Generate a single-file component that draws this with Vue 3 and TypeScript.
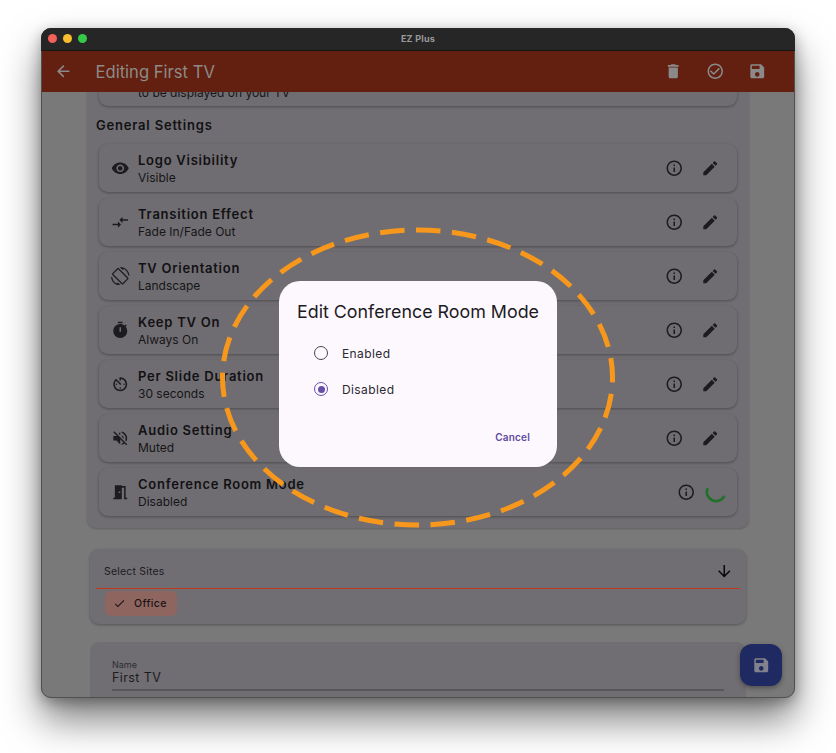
<script setup lang="ts">
interface SettingRow {
  title: string;
  value: string;
  icon: string;
  saving?: boolean;
}

const icons = {
  back: 'M20 11H7.83l5.59-5.59L12 4l-8 8 8 8 1.41-1.41L7.83 13H20v-2z',
  trash: 'M6 19c0 1.1.9 2 2 2h8c1.1 0 2-.9 2-2V7H6v12zM19 4h-3.5l-1-1h-5l-1 1H5v2h14V4z',
  done: 'M16.59 7.58L10 14.17l-3.59-3.58L5 12l5 5 8-8zM12 2C6.48 2 2 6.48 2 12s4.48 10 10 10 10-4.48 10-10S17.52 2 12 2zm0 18c-4.42 0-8-3.58-8-8s3.58-8 8-8 8 3.58 8 8-3.58 8-8 8z',
  save: 'M17 3H5c-1.11 0-2 .9-2 2v14c0 1.1.89 2 2 2h14c1.1 0 2-.9 2-2V7l-4-4zm-5 16c-1.66 0-3-1.34-3-3s1.34-3 3-3 3 1.34 3 3-1.34 3-3 3zm3-10H5V5h10v4z',
  info: 'M11 7h2v2h-2zm0 4h2v6h-2zm1-9C6.48 2 2 6.48 2 12s4.48 10 10 10 10-4.48 10-10S17.52 2 12 2zm0 18c-4.41 0-8-3.59-8-8s3.59-8 8-8 8 3.59 8 8-3.59 8-8 8z',
  edit: 'M3 17.25V21h3.75L17.81 9.94l-3.75-3.75L3 17.25zM20.71 7.04c.39-.39.39-1.02 0-1.41l-2.34-2.34c-.39-.39-1.02-.39-1.41 0l-1.83 1.83 3.75 3.75 1.83-1.83z',
  check: 'M9 16.17L4.83 12l-1.42 1.41L9 19 21 7l-1.41-1.41z',
  down: 'M20 12l-1.41-1.41L13 16.17V4h-2v12.17l-5.58-5.59L4 12l8 8 8-8z',
};

const rows: SettingRow[] = [
  {
    title: 'Logo Visibility',
    value: 'Visible',
    icon: 'M12 4.5C7 4.5 2.73 7.61 1 12c1.73 4.39 6 7.5 11 7.5s9.27-3.11 11-7.5c-1.73-4.39-6-7.5-11-7.5zM12 17c-2.76 0-5-2.24-5-5s2.24-5 5-5 5 2.24 5 5-2.24 5-5 5zm0-8c-1.66 0-3 1.34-3 3s1.34 3 3 3 3-1.34 3-3-1.34-3-3-3z',
  },
  {
    title: 'Transition Effect',
    value: 'Fade In/Fade Out',
    icon: 'M9.01 14H2v2h7.01v3L13 15l-3.99-4v3zm5.98-1v-3H22V8h-7.01V5L11 9l3.99 4z',
  },
  {
    title: 'TV Orientation',
    value: 'Landscape',
    icon: 'M16.48 2.52c3.27 1.55 5.61 4.72 5.97 8.48h1.5C23.44 4.84 18.29 0 12 0l-.66.03 3.81 3.81 1.33-1.32zm-6.25-.77c-.59-.59-1.54-.59-2.12 0L1.75 8.11c-.59.59-.59 1.54 0 2.12l12.02 12.02c.59.59 1.54.59 2.12 0l6.36-6.36c.59-.59.59-1.54 0-2.12L10.23 1.75zm4.6 19.44L2.81 9.17l6.36-6.36 12.02 12.02-6.36 6.36zm-7.31.29C4.25 19.94 1.91 16.76 1.55 13H.05C.56 19.16 5.71 24 12 24l.66-.03-3.81-3.81-1.33 1.32z',
  },
  {
    title: 'Keep TV On',
    value: 'Always On',
    icon: 'M9 1h6v2H9zm10.03 6.39l1.42-1.42c-.43-.51-.9-.99-1.41-1.41l-1.42 1.42C16.07 4.74 14.12 4 12 4c-4.97 0-9 4.03-9 9s4.02 9 9 9 9-4.03 9-9c0-2.12-.74-4.07-1.97-5.61zM13 14h-2V8h2v6z',
  },
  {
    title: 'Per Slide Duration',
    value: '30 seconds',
    icon: 'M11 17c0 .55.45 1 1 1s1-.45 1-1-.45-1-1-1-1 .45-1 1zm0-14v4h2V5.08c3.39.49 6 3.39 6 6.92 0 3.87-3.13 7-7 7s-7-3.13-7-7c0-1.68.59-3.22 1.58-4.42L12 13l1.41-1.41-6.8-6.8v.02C4.42 6.45 3 9.05 3 12c0 4.97 4.02 9 9 9 4.97 0 9-4.03 9-9s-4.03-9-9-9h-1zm7 9c0-.55-.45-1-1-1s-1 .45-1 1 .45 1 1 1 1-.45 1-1zM6 12c0 .55.45 1 1 1s1-.45 1-1-.45-1-1-1-1 .45-1 1z',
  },
  {
    title: 'Audio Setting',
    value: 'Muted',
    icon: 'M16.5 12c0-1.77-1.02-3.29-2.5-4.03v2.21l2.45 2.45c.03-.2.05-.41.05-.63zm2.5 0c0 .94-.2 1.82-.54 2.64l1.51 1.51C20.63 14.91 21 13.5 21 12c0-4.28-2.99-7.86-7-8.77v2.06c2.89.86 5 3.54 5 6.71zM4.27 3L3 4.27 7.73 9H3v6h4l5 5v-6.73l4.25 4.25c-.67.52-1.42.93-2.25 1.18v2.06c1.38-.31 2.63-.95 3.69-1.81L19.73 21 21 19.73l-9-9L4.27 3zM12 4L9.91 6.09 12 8.18V4z',
  },
  {
    title: 'Conference Room Mode',
    value: 'Disabled',
    icon: 'M14 6v15H3v-2h2V3h9v1h5v15h2v2h-4V6h-3zm-4 5v2h2v-2h-2z',
    saving: true,
  },
];
</script>

<template>
  <div class="page">
    <div class="window">
      <div class="titleBar">
        <div class="lights">
          <span class="light red"></span>
          <span class="light yellow"></span>
          <span class="light green"></span>
        </div>
        <span class="windowName">EZ Plus</span>
      </div>

      <header class="appBar">
        <svg class="icon backIcon" viewBox="0 0 24 24"><path :d="icons.back" /></svg>
        <span class="appTitle">Editing First TV</span>
        <div class="appActions">
          <svg class="icon" viewBox="0 0 24 24"><path :d="icons.trash" /></svg>
          <svg class="icon" viewBox="0 0 24 24"><path :d="icons.done" /></svg>
          <svg class="icon" viewBox="0 0 24 24"><path :d="icons.save" /></svg>
        </div>
      </header>

      <main class="content">
        <section class="settingsCard">
          <div class="row clippedRow">
            <div class="rowText"><span class="rowValue">to be displayed on your TV</span></div>
          </div>
          <h2 class="sectionTitle">General Settings</h2>
          <div v-for="row in rows" :key="row.title" class="row">
            <svg class="icon rowIcon" viewBox="0 0 24 24"><path :d="row.icon" /></svg>
            <div class="rowText">
              <span class="rowTitle">{{ row.title }}</span>
              <span class="rowValue">{{ row.value }}</span>
            </div>
            <div class="rowActions" :class="{ saving: row.saving }">
              <svg class="icon" viewBox="0 0 24 24"><path :d="icons.info" /></svg>
              <svg v-if="row.saving" class="spinner" viewBox="0 0 24 24">
                <path d="M2.85 7.97A10 10 0 0 0 21.08 16.19" />
              </svg>
              <svg v-else class="icon" viewBox="0 0 24 24"><path :d="icons.edit" /></svg>
            </div>
          </div>
        </section>

        <section class="sitesCard">
          <div class="sitesHead">
            <span class="sitesLabel">Select Sites</span>
            <svg class="icon downIcon" viewBox="0 0 24 24"><path :d="icons.down" /></svg>
          </div>
          <div class="chips">
            <span class="chip">
              <svg class="icon chipIcon" viewBox="0 0 24 24"><path :d="icons.check" /></svg>
              Office
            </span>
          </div>
        </section>

        <section class="nameCard">
          <span class="nameLabel">Name</span>
          <span class="nameValue">First TV</span>
          <div class="nameLine"></div>
        </section>
      </main>

      <button class="fab">
        <svg class="icon" viewBox="0 0 24 24"><path :d="icons.save" /></svg>
      </button>

      <div class="modalLayer">
        <div class="dialog">
          <h1 class="dialogTitle">Edit Conference Room Mode</h1>
          <div class="options">
            <label class="option">
              <span class="radio"></span>
              Enabled
            </label>
            <label class="option">
              <span class="radio selected"></span>
              Disabled
            </label>
          </div>
          <div class="dialogActions"><span class="cancel">Cancel</span></div>
        </div>
      </div>

      <!-- hand drawn callout round the dialog -->
      <svg class="callout" viewBox="0 0 754 670">
        <ellipse cx="376.5" cy="349.5" rx="195" ry="147.5" pathLength="1080" />
      </svg>
    </div>
  </div>
</template>

<style>
html,
body {
  background: #ffffff;
}
</style>

<style scoped>
.page {
  height: 753px;
  box-sizing: border-box;
  padding: 28px 41px 55px;
  overflow: hidden;
  font-family: Inter, "Liberation Sans", sans-serif;
}

.window {
  position: relative;
  height: 670px;
  display: flex;
  flex-direction: column;
  overflow: hidden;
  border-radius: 10px;
  background: #797979;
  outline: 1px solid #505050;
  outline-offset: -1px;
  box-shadow: 0 22px 38px rgba(0, 0, 0, 0.5), 0 4px 14px rgba(0, 0, 0, 0.3);
}

.icon {
  width: 18.5px;
  height: 18.5px;
  flex: none;
  fill: currentColor;
  display: block;
}

.titleBar {
  position: relative;
  flex: none;
  height: 22px;
  display: flex;
  align-items: center;
  justify-content: center;
  background: #262626;
  border-bottom: 1px solid #161616;
}

.lights {
  position: absolute;
  left: 7px;
  top: 6px;
  display: flex;
  gap: 6px;
}

.light {
  width: 9px;
  height: 9px;
  border-radius: 50%;
}

.red {
  background: #f4605a;
}

.yellow {
  background: #f9bd2d;
}

.green {
  background: #35c94a;
}

.windowName {
  margin-bottom: 2px;
  font-size: 9px;
  font-weight: 700;
  color: #9a9a9a;
  letter-spacing: 0.25px;
}

.appBar {
  flex: none;
  height: 41px;
  display: flex;
  align-items: center;
  padding: 0 29px 0 13px;
  background: #631f10;
  color: #8a8a8a;
}

.backIcon {
  margin-right: 23px;
}

.appTitle {
  flex: 1;
  font-size: 16.6px;
  color: #8c8b88;
}

.appActions {
  display: flex;
  gap: 23.5px;
}

.content {
  flex: 1;
  min-height: 0;
  overflow: hidden;
  display: flex;
  flex-direction: column;
  align-items: center;
}

.settingsCard {
  width: 662px;
  flex: none;
  box-sizing: border-box;
  margin-top: -46px;
  padding: 12px;
  display: flex;
  flex-direction: column;
  gap: 6px;
  border-radius: 9px;
  background: #706e72;
  box-shadow: 0 1px 2px rgba(0, 0, 0, 0.2);
}

.row {
  flex: none;
  height: 48px;
  display: flex;
  align-items: center;
  padding: 0 18px 0 12px;
  box-sizing: border-box;
  border-radius: 9px;
  background: #6f6d71;
  box-shadow: 0 1px 3px rgba(0, 0, 0, 0.32);
  color: #1c1b1f;
}

.clippedRow {
  align-items: flex-end;
  padding-left: 39px;
  padding-bottom: 5px;
}

.sectionTitle {
  margin: 4px 0 4px -3px;
  font-size: 13px;
  line-height: 18px;
  font-weight: 600;
  letter-spacing: 0.8px;
  color: #121114;
}

.rowIcon {
  margin-right: 8.5px;
}

.rowText {
  flex: 1;
  padding-top: 2px;
  display: flex;
  flex-direction: column;
}

.rowTitle {
  font-size: 13px;
  line-height: 17px;
  font-weight: 600;
  letter-spacing: 0.75px;
  color: #121114;
}

.rowValue {
  font-size: 12px;
  line-height: 17px;
  color: #161518;
}

.rowActions {
  display: flex;
  align-items: center;
  gap: 17.5px;
}

.rowActions.saving {
  gap: 10px;
  margin-right: -8px;
}

.spinner {
  width: 22px;
  height: 22px;
  fill: none;
  stroke: #22702c;
  stroke-width: 3;
}

.sitesCard {
  flex: none;
  width: 656px;
  height: 75px;
  margin-top: 21px;
  box-sizing: border-box;
  padding: 0 6px;
  border-radius: 9px;
  background: #706e72;
  box-shadow: 0 1px 3px rgba(0, 0, 0, 0.3);
}

.sitesHead {
  height: 40px;
  display: flex;
  align-items: center;
  justify-content: space-between;
  padding: 5px 7px 0 8px;
  border-bottom: 1px solid #c0371a;
  box-sizing: border-box;
}

.sitesLabel {
  font-size: 10.5px;
  letter-spacing: 0.2px;
  color: #1c1b1f;
}

.downIcon {
  color: #0a0a0a;
}

.chips {
  padding: 2px 9px;
  display: flex;
}

.chip {
  height: 25px;
  width: 72px;
  box-sizing: border-box;
  padding-left: 8px;
  display: flex;
  align-items: center;
  gap: 8px;
  border-radius: 6px;
  background: #8f655f;
  font-size: 10.5px;
  font-weight: 500;
  letter-spacing: 0.4px;
  color: #1a1416;
}

.chipIcon {
  width: 13px;
  height: 13px;
}

.nameCard {
  flex: none;
  width: 656px;
  height: 70px;
  margin-top: 18px;
  box-sizing: border-box;
  padding: 17px 22px 0;
  display: flex;
  flex-direction: column;
  border-radius: 9px;
  background: #706e72;
}

.nameLabel {
  font-size: 9px;
  line-height: 11px;
  color: #2e2d31;
}

.nameValue {
  font-size: 12.5px;
  line-height: 15px;
  letter-spacing: 0.4px;
  color: #1c1b1f;
}

.nameLine {
  height: 1.5px;
  margin-top: 4px;
  background: #58565a;
}

.fab {
  position: absolute;
  right: 13px;
  bottom: 12px;
  width: 42px;
  height: 42px;
  padding: 0;
  border: 0;
  display: flex;
  align-items: center;
  justify-content: center;
  border-radius: 12px;
  background: #1f2a62;
  color: #82828c;
  box-shadow: 0 2px 5px rgba(0, 0, 0, 0.35);
}

.modalLayer {
  position: absolute;
  inset: 22px 0 0;
  display: flex;
  align-items: center;
  justify-content: center;
}

.dialog {
  width: 278px;
  height: 186px;
  box-sizing: border-box;
  padding: 18px 18px 0;
  display: flex;
  flex-direction: column;
  border-radius: 21px;
  background: #fdf8fe;
}

.dialogTitle {
  margin: 0;
  font-size: 17.85px;
  line-height: 25px;
  font-weight: 400;
  white-space: nowrap;
  color: #1c1b1f;
}

.options {
  margin-top: 11px;
  display: flex;
  flex-direction: column;
}

.option {
  height: 36px;
  padding-left: 17px;
  display: flex;
  align-items: center;
  gap: 14px;
  font-size: 12px;
  letter-spacing: 0.4px;
  color: #2b2930;
}

.radio {
  width: 14px;
  height: 14px;
  box-sizing: border-box;
  border: 1.6px solid #49454f;
  border-radius: 50%;
  display: flex;
  align-items: center;
  justify-content: center;
}

.radio.selected {
  border-color: #654fa8;
}

.radio.selected::after {
  content: "";
  width: 7px;
  height: 7px;
  border-radius: 50%;
  background: #654fa8;
}

.dialogActions {
  margin-top: 24px;
  display: flex;
  justify-content: flex-end;
  padding-right: 9px;
}

.cancel {
  font-size: 10px;
  font-weight: 600;
  letter-spacing: 0.2px;
  color: #5d4a9e;
}

.callout {
  position: absolute;
  inset: 0;
  width: 754px;
  height: 670px;
  pointer-events: none;
  fill: none;
  stroke: #f7981d;
  stroke-width: 5;
  stroke-dasharray: 24.5 11.5;
  stroke-dashoffset: 19.5;
}
</style>
